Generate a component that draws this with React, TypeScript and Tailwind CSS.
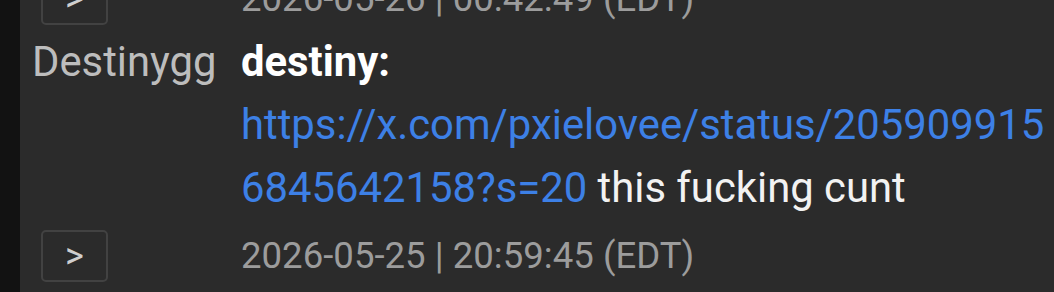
import React from 'react';

interface StampRowProps {
  stamp: string;
  className?: string;
}

const StampRow: React.FC<StampRowProps> = ({ stamp, className = '' }) => (
  <div className={`flex items-center ${className}`}>
    <div className="w-[221px] shrink-0">
      <button className="ml-[21px] flex h-[52px] w-[67px] items-center justify-center rounded-[5px] border-2 border-[#424242] bg-[#2b2b2b] text-[36px] leading-none text-[#cfcfcf]">
        &gt;
      </button>
    </div>
    <div className="text-[36.6px] leading-none text-[#9c9c9c]">{stamp}</div>
  </div>
);

export default function App() {
  return (
    <div
      className="flex h-[292px] w-[1054px] overflow-hidden bg-[#121212]"
      style={{ fontFamily: 'Roboto, "Noto Sans", sans-serif' }}
    >
      <div className="w-[20px] shrink-0 bg-[#121212]" />
      <div className="flex-1 bg-[#2b2b2b]">
        <StampRow stamp="2026-05-26 | 00:42:49 (EDT)" className="-mt-[27px]" />

        {/* Message */}
        <div className="flex pt-[5px] pb-[11px] text-[41.8px] leading-[63px]">
          <div className="w-[221px] shrink-0 pl-[12px] text-[#bdbdbd]">Destinygg</div>
          <div className="w-[813px] break-all">
            <div className="font-bold text-white">destiny:</div>
            <div className="text-[#f2f2f2]">
              <a className="text-[#3d80e6]" href="#">
                https://x.com/pxielovee/status/2059099156845642158?s=20
              </a>{' '}
              <span className="break-normal">this fucking cunt</span>
            </div>
          </div>
        </div>

        <StampRow stamp="2026-05-25 | 20:59:45 (EDT)" />
      </div>
    </div>
  );
}
